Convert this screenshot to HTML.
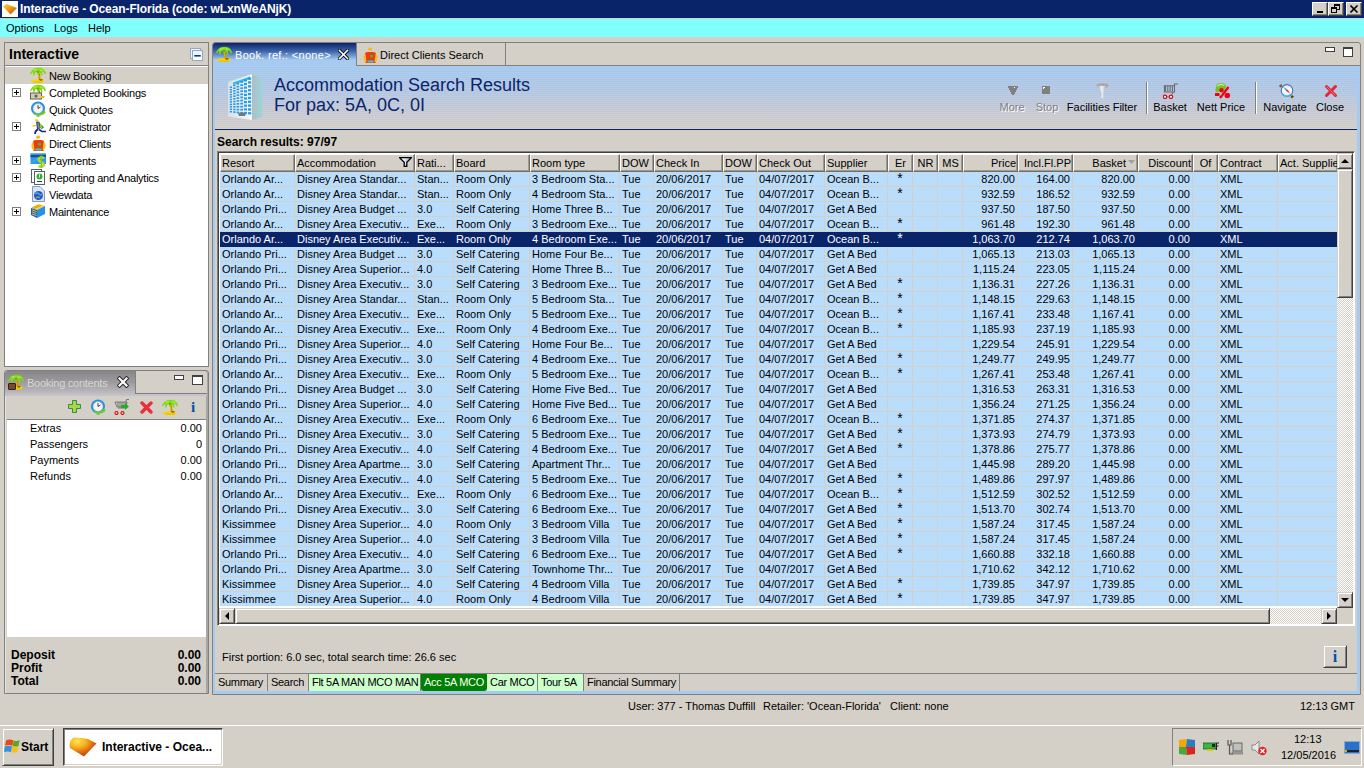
<!DOCTYPE html>
<html><head><meta charset="utf-8">
<style>
*{box-sizing:border-box;margin:0;padding:0}
html,body{width:1364px;height:768px;overflow:hidden;background:#D4D0C8;font-family:"Liberation Sans",sans-serif;font-size:11px;color:#000}
.a{position:absolute}
.t{position:absolute;white-space:nowrap;line-height:13px}
/* title bar */
#title{left:0;top:0;width:1364px;height:18px;background:#0A246A}
#title .tx{left:20px;top:2px;color:#fff;font-weight:bold;font-size:12px;line-height:14px;letter-spacing:-0.1px}
.wb{position:absolute;top:2px;width:16px;height:14px;background:#D4D0C8;border-top:1px solid #fff;border-left:1px solid #fff;border-right:1px solid #404040;border-bottom:1px solid #404040;box-shadow:inset -1px -1px 0 #808080}
#menu{left:0;top:18px;width:1364px;height:19px;background:#80FFFF;border-top:1px solid #D4D0C8}
#menu .t{top:3px}
/* panels */
.panel{position:absolute;border:1px solid #808080}
.white{background:#fff}
/* table */
#tbl{left:217px;top:151px;width:1138px;height:475px;border-top:1px solid #808080;border-left:1px solid #808080;border-right:1px solid #fff;border-bottom:1px solid #fff}
#tbl .in{position:absolute;left:0;top:0;width:1136px;height:473px;border-top:1px solid #404040;border-left:1px solid #404040;background:#fff}
#hdr{position:absolute;left:220px;top:154px;width:1117px;height:18px;overflow:hidden}
.hc{position:absolute;top:0;height:18px;background:#D4D0C8;border-top:1px solid #fff;border-left:1px solid #fff;border-right:1px solid #716F64;border-bottom:1px solid #716F64;box-shadow:inset -1px -1px 0 #9D9A92;padding:2px 1px 0 1px;white-space:nowrap;overflow:hidden;line-height:13px}
.hc.ar{text-align:right}.hc.ac{text-align:center}
#body{position:absolute;left:220px;top:172px;width:1117px;height:434px;overflow:hidden;background:#BBDDFC}
.row{position:absolute;left:0;width:1117px;height:15px;border-bottom:1px solid #D4D0C8}
.row.sel{background:#0A246A;color:#fff;border-bottom-color:#0A246A}
.c{position:absolute;top:0;height:14px;line-height:14px;padding:0 2px;white-space:nowrap;overflow:hidden}
.ast{font-size:14px;line-height:14px;position:relative;top:-1px}
.c.ar{text-align:right}.c.ac{text-align:center}
.vg{position:absolute;top:0;width:1px;height:435px;background:#D4D0C8}
.btn3d{position:absolute;background:#D4D0C8;border-top:1px solid #D4D0C8;border-left:1px solid #D4D0C8;border-right:1px solid #404040;border-bottom:1px solid #404040;box-shadow:inset 1px 1px 0 #fff,inset -1px -1px 0 #808080}
.dither{background-color:#fff;background-image:linear-gradient(45deg,#D4D0C8 25%,transparent 25%,transparent 75%,#D4D0C8 75%),linear-gradient(45deg,#D4D0C8 25%,transparent 25%,transparent 75%,#D4D0C8 75%);background-size:2px 2px;background-position:0 0,1px 1px}
.tree .t{left:49px;margin-top:1px;letter-spacing:-0.25px}
.pm{position:absolute;left:12px;width:9px;height:9px;border:1px solid #808080;background:#fff}
.pm:before{content:"";position:absolute;left:1px;top:3px;width:5px;height:1px;background:#000}
.pm:after{content:"";position:absolute;left:3px;top:1px;width:1px;height:5px;background:#000}
.btab{position:absolute;top:674px;height:17px;border-right:1px solid #808080;padding:2px 0 0 3px;line-height:13px;white-space:nowrap;letter-spacing:-0.3px;overflow:hidden}
.tb .t{top:101px}
</style></head><body>
<svg width="0" height="0" style="position:absolute">
<defs>
<symbol id="palm" viewBox="0 0 16 16">
 <path d="M0.5 13.8 Q1.5 12.3 5 12.2 L13 12.2 Q15 12.6 14.5 14.3 Q12.5 16 8 16 Q2.5 16 0.5 13.8 Z" fill="#F8D800"/>
 <path d="M3 15 H13" stroke="#E8B800" stroke-width="1"/>
 <path d="M8.2 4.5 Q9.8 8 9.6 13.5" stroke="#E8B000" stroke-width="2.2" fill="none"/>
 <path d="M9 7.5 L10 8 M9.3 10 L10.2 10.5 M9 12 L10 12.5" stroke="#B04A00" stroke-width="1"/>
 <path d="M10 13 L12.5 12.8" stroke="#503000" stroke-width="1"/>
 <path d="M0 6.5 Q1.5 2.5 5 1.2 Q8 0.2 11 1 Q15 2.2 16 6.5 L15 7.5 Q14 5 12 4.2 L12.5 8.5 L11.3 8.5 Q10.5 5.5 9.3 4.8 L8.8 8 L7.8 8 Q7.2 5.5 6.3 4.8 Q4.8 5.3 4.4 8.5 L3.3 8.5 Q3.2 5.5 2.8 5 Q1.8 5.5 1.2 7.5 Z" fill="#80D818"/>
 <path d="M3 3 Q6 1.5 8 2.5 Q6 3 5 4.5 Z M9 2.5 Q12 1.5 14 4 Q12 3.5 10.5 4 Z" fill="#A8EC30"/>
 <path d="M6.5 4.5 Q8 3.5 9.5 4.5 L9 6 L7.5 6 Z" fill="#58B010"/>
</symbol>
<symbol id="clock" viewBox="0 0 16 16">
 <circle cx="8" cy="7.5" r="7" fill="#1E90E8"/><circle cx="8" cy="7.5" r="5" fill="#F4F4F4" stroke="#9AB" stroke-width="0.6"/>
 <path d="M8 4 V7.5 L10.5 6" stroke="#333" stroke-width="0.9" fill="none"/>
 <path d="M3 11 Q8 16 14.5 9 L15.5 12 Q10 17 3.5 13 Z" fill="#6CC830"/><path d="M6 15.5 L9 12 L9.5 16Z" fill="#6CC830"/>
</symbol>
<symbol id="admin" viewBox="0 0 16 16">
 <path d="M5 1.5 Q7 0.5 8.5 2.5 L7.5 4 L5.5 3.5 Z" fill="#F8C820"/>
 <path d="M6 4 L9 3.5 L11 7 L9.5 11 L7 11 Z" fill="#3A48A8"/>
 <path d="M8 5 L9 10" stroke="#60B040" stroke-width="1.4"/>
 <path d="M10 6 Q13 7 14 9.5 L12 11 L10 10 Z" fill="#30A020"/><path d="M10.5 6.5 L11.5 10" stroke="#F8C820" stroke-width="1.2"/>
 <path d="M6 7.5 L2.5 8" stroke="#F8C820" stroke-width="1.4"/>
 <path d="M8 11 L5.5 13.5 L5 16" stroke="#1A2090" stroke-width="1.8" fill="none"/>
 <path d="M9 11.5 L12 13.5 L16 13.5" stroke="#1A2090" stroke-width="1.6" fill="none"/>
</symbol>
<symbol id="client" viewBox="0 0 16 16">
 <path d="M6 2 Q7 0 9.5 0.8 Q11 2 9.5 3.5 L7 3.8 Q5.5 3 6 2Z" fill="#F8B818"/>
 <path d="M3 7 Q3 5 6 5 L11 5 Q14 5 14 7 L13.5 16 L3.5 16 Z" fill="#F03A10"/>
 <path d="M1.5 9 Q2 7 3.5 7 L4.5 15 Q2 15 1.5 12 Z M15.5 9 Q15 7 13.5 7 L12.5 15 Q15 15 15.5 12 Z" fill="#F8C020"/>
 <rect x="8" y="8" width="3" height="2.5" fill="#30C040"/>
 <rect x="5.5" y="13.5" width="6" height="2" fill="#30D0D0"/>
</symbol>
<symbol id="pay" viewBox="0 0 16 16">
 <rect x="0.5" y="1" width="15.5" height="11" fill="#2C98E8"/>
 <rect x="0.5" y="1" width="15.5" height="1" fill="#60B8F8"/>
 <rect x="0.5" y="3" width="15.5" height="2.2" fill="#18508A"/>
 <path d="M1 11 L8 6" stroke="#60B0F0" stroke-width="0.8"/>
 <path d="M14 6.5 Q13 5 10.5 5.5 Q8 6.5 9 8.5 Q10 10 12 10.5 Q14.5 11.5 13.5 13.5 Q12 15.5 8.5 14" stroke="#A8DC28" stroke-width="2.6" fill="none"/>
 <path d="M11.3 3.5 V16" stroke="#88C020" stroke-width="1.2"/>
</symbol>
<symbol id="report" viewBox="0 0 16 16">
 <rect x="1.5" y="0.5" width="10" height="13" fill="#fff" stroke="#506070" stroke-width="1"/>
 <rect x="4.5" y="2.5" width="10" height="13" fill="#fff" stroke="#506070" stroke-width="1"/>
 <circle cx="9.5" cy="7.5" r="3" fill="#30B030"/><path d="M9.5 5.5 V8.5" stroke="#fff" stroke-width="1"/><path d="M7 12.5 H12" stroke="#333" stroke-width="1"/>
</symbol>
<symbol id="view" viewBox="0 0 16 16">
 <path d="M2.5 0.5 H10 L14.5 5 V15.5 H2.5Z" fill="#D8E4F4" stroke="#8898B8" stroke-width="1"/>
 <circle cx="8.5" cy="9.5" r="4.5" fill="#3050C8"/><path d="M5 8 Q7 6 9 8 Q11 10 12 8" stroke="#40B0E0" stroke-width="1.5" fill="none"/><path d="M6 12 Q8 10 10 12" stroke="#60C050" stroke-width="1.2" fill="none"/>
</symbol>
<symbol id="maint" viewBox="0 0 16 16">
 <path d="M1 5 L9 1 L15 3 L7 7Z" fill="#F8D040"/><path d="M1 5 L7 7 L7 15 L1 12Z" fill="#1060C0"/><path d="M7 7 L15 3 L15 11 L7 15Z" fill="#2890E8"/>
 <path d="M2 7 L6.5 8.5 M2 9 L6.5 10.5 M2 11 L6.5 12.5" stroke="#F0C030" stroke-width="1"/><path d="M2.5 4.5 L9 2 M4 5.5 L11 2.5" stroke="#D09000" stroke-width="0.8"/>
</symbol>
<symbol id="cash" viewBox="0 0 16 16">
 <rect x="0.5" y="9" width="11" height="6" fill="#D0D0B0" stroke="#606050" stroke-width="1"/><circle cx="6" cy="12" r="1.6" fill="#606050"/><path d="M11 12 H15 L14 14 H11Z" fill="#F0C000"/>
</symbol>
</defs>
</svg>

<!-- Title bar -->
<div id="title" class="a">
  <div class="a" style="left:2px;top:1px;width:16px;height:16px;background:#fff"></div>
  <svg class="a" style="left:2px;top:1px" width="16" height="16" viewBox="0 0 16 16"><defs><linearGradient id="tic" x1="0" y1="0" x2="1" y2="1"><stop offset="0" stop-color="#FFD030"/><stop offset="0.45" stop-color="#F09A18"/><stop offset="1" stop-color="#B84A08"/></linearGradient></defs><path d="M1 5.5 L4.5 3 L15 7 L8.5 13.5 Z" fill="url(#tic)"/></svg>
  <div class="t tx">Interactive - Ocean-Florida (code: wLxnWeANjK)</div>
  <div class="wb" style="left:1312px"><div class="a" style="left:4px;top:8px;width:6px;height:2px;background:#000"></div></div>
  <div class="wb" style="left:1328px"><div class="a" style="left:5px;top:1px;width:6px;height:6px;border:1px solid #000;border-top-width:2px"></div><div class="a" style="left:2px;top:4px;width:6px;height:6px;border:1px solid #000;border-top-width:2px;background:#D4D0C8"></div></div>
  <div class="wb" style="left:1346px"><svg class="a" style="left:3px;top:2px" width="9" height="8"><path d="M0.5 0.5 L7.5 7.5 M7.5 0.5 L0.5 7.5" stroke="#000" stroke-width="1.6"/></svg></div>
</div>
<div id="menu" class="a">
  <div class="t" style="left:6px">Options</div>
  <div class="t" style="left:54px">Logs</div>
  <div class="t" style="left:88px">Help</div>
</div>

<!-- Left tree panel -->
<div class="panel" style="left:4px;top:42px;width:205px;height:325px;background:#fff">
  <div class="a" style="left:0;top:0;width:203px;height:23px;background:#D4D0C8;border-bottom:1px solid #808080"></div>
  <div class="t" style="left:4px;top:3px;font-weight:bold;font-size:14px;line-height:16px">Interactive</div>
  <div class="a" style="left:185px;top:5px;width:11px;height:11px;border:1px solid #9AA4BC;background:#E8F8FF"></div>
  <div class="a" style="left:187px;top:7px;width:11px;height:11px;border:1px solid #9AA4BC;background:linear-gradient(#E0F6FF,#fff)"><div class="a" style="left:1px;top:4px;width:7px;height:2px;background:linear-gradient(#0A3A7A 50%,#6A8AB0 50%);border-radius:1px"></div></div>
  <div class="a" style="left:0;top:24px;width:203px;height:17px;background:#D4D0C8"></div>
</div>
<div class="tree">
  <div class="t" style="top:69px">New Booking</div>
  <div class="t" style="top:86px">Completed Bookings</div>
  <div class="t" style="top:103px">Quick Quotes</div>
  <div class="t" style="top:120px">Administrator</div>
  <div class="t" style="top:137px">Direct Clients</div>
  <div class="t" style="top:154px">Payments</div>
  <div class="t" style="top:171px">Reporting and Analytics</div>
  <div class="t" style="top:188px">Viewdata</div>
  <div class="t" style="top:205px">Maintenance</div>
  <svg class="a" style="left:30px;top:67px" width="16" height="16"><use href="#palm"/></svg>
  <svg class="a" style="left:30px;top:84px" width="16" height="11" viewBox="0 0 16 11" preserveAspectRatio="xMidYMin slice"><use href="#palm" width="16" height="16"/></svg>
  <svg class="a" style="left:30px;top:84px" width="16" height="16"><use href="#cash"/></svg>
  <svg class="a" style="left:30px;top:101px" width="16" height="16"><use href="#clock"/></svg>
  <svg class="a" style="left:30px;top:118px" width="16" height="16"><use href="#admin"/></svg>
  <svg class="a" style="left:30px;top:135px" width="16" height="16"><use href="#client"/></svg>
  <svg class="a" style="left:30px;top:152px" width="16" height="16"><use href="#pay"/></svg>
  <svg class="a" style="left:30px;top:169px" width="16" height="16"><use href="#report"/></svg>
  <svg class="a" style="left:30px;top:186px" width="16" height="16"><use href="#view"/></svg>
  <svg class="a" style="left:30px;top:203px" width="16" height="16"><use href="#maint"/></svg>
  <div class="pm" style="top:88px"></div>
  <div class="pm" style="top:122px"></div>
  <div class="pm" style="top:156px"></div>
  <div class="pm" style="top:173px"></div>
  <div class="pm" style="top:207px"></div>
</div>

<!-- Booking contents panel -->
<div class="panel" style="left:4px;top:370px;width:205px;height:324px;background:#D4D0C8;border-radius:3px 3px 0 0;box-shadow:inset 1px 0 0 #E8E6E2,inset -2px 0 0 #A8A6A2"></div>
<div class="a" style="left:5px;top:371px;width:202px;height:25px;background:linear-gradient(#868588,#9d9b9e 45%,#bbb8bd 85%,#c8c5cc);border-radius:3px 3px 0 0"></div>
<div class="a" style="left:135px;top:371px;width:72px;height:23px;background:#D4D0C8;border-left:1px solid #808080;border-bottom:1px solid #808080;border-top-right-radius:3px"></div>
<svg class="a" style="left:8px;top:374px" width="16" height="16"><use href="#palm"/></svg>
<div class="a" style="left:8px;top:383px;width:8px;height:7px;background:#7A4A30;border:1px solid #3A2010;border-radius:1px"></div>
<div class="t" style="left:27px;top:377px;color:#D8D6D2;letter-spacing:-0.25px">Booking contents</div>
<svg class="a" style="left:117px;top:376px" width="12" height="12" viewBox="0 0 12 12"><path d="M2.5 2.5 L9.5 9.5 M9.5 2.5 L2.5 9.5" stroke="#222" stroke-width="4" stroke-linecap="square"/><path d="M2.5 2.5 L9.5 9.5 M9.5 2.5 L2.5 9.5" stroke="#fff" stroke-width="2.2" stroke-linecap="square"/></svg>
<div class="a" style="left:174px;top:375px;width:10px;height:5px;border:1px solid #404040;background:#fff"></div>
<div class="a" style="left:192px;top:375px;width:11px;height:10px;border:1px solid #404040;border-top-width:2px;background:#fff"></div>
<div class="a" style="left:7px;top:419px;width:199px;height:1px;background:#808080"></div>
<div class="a" style="left:7px;top:420px;width:199px;height:217px;background:#fff"></div>
<!-- booking toolbar icons -->
<svg class="a" style="left:68px;top:400px" width="13" height="13" viewBox="0 0 13 13"><path d="M4.5 0.5 H8.5 V4.5 H12.5 V8.5 H8.5 V12.5 H4.5 V8.5 H0.5 V4.5 H4.5 Z" fill="#A8D848" stroke="#3A8A40" stroke-width="1"/></svg>
<svg class="a" style="left:90px;top:399px" width="16" height="16"><use href="#clock"/></svg>
<svg class="a" style="left:114px;top:399px" width="16" height="16" viewBox="0 0 16 16"><path d="M15 0.5 H12.5 L11 9 H4" stroke="#777" stroke-width="1" fill="none"/><path d="M1 3 H13 L12 8 H3 Z" fill="none" stroke="#777" stroke-width="1"/><path d="M4 3 V8 M6 3 V8 M8 3 V8 M10 3 V8" stroke="#777" stroke-width="1"/><circle cx="2.5" cy="14" r="1.5" fill="none" stroke="#E00000" stroke-width="1.1"/><circle cx="8.5" cy="14" r="1.5" fill="none" stroke="#E00000" stroke-width="1.1"/><path d="M7 6 H11 V4 L15 7.5 L11 11 V9 H7 Z" fill="#20B020"/></svg>
<svg class="a" style="left:140px;top:401px" width="13" height="13" viewBox="0 0 13 13"><path d="M2 2 L11 11 M11 2 L2 11" stroke="#E8303A" stroke-width="3.4" stroke-linecap="round"/></svg>
<svg class="a" style="left:162px;top:399px" width="16" height="16"><use href="#palm"/></svg>
<div class="t" style="left:191px;top:400px;font-family:'Liberation Serif',serif;font-weight:bold;font-size:15px;line-height:15px;color:#0050A8">i</div>
<div class="t" style="left:30px;top:422px">Extras</div><div class="t" style="left:159px;top:422px;width:43px;text-align:right">0.00</div>
<div class="t" style="left:30px;top:438px">Passengers</div><div class="t" style="left:159px;top:438px;width:43px;text-align:right">0</div>
<div class="t" style="left:30px;top:454px">Payments</div><div class="t" style="left:159px;top:454px;width:43px;text-align:right">0.00</div>
<div class="t" style="left:30px;top:470px">Refunds</div><div class="t" style="left:159px;top:470px;width:43px;text-align:right">0.00</div>
<div class="t" style="left:11px;top:649px;font-weight:bold;font-size:12px">Deposit</div><div class="t" style="left:150px;top:649px;width:51px;text-align:right;font-weight:bold;font-size:12px">0.00</div>
<div class="t" style="left:11px;top:662px;font-weight:bold;font-size:12px">Profit</div><div class="t" style="left:150px;top:662px;width:51px;text-align:right;font-weight:bold;font-size:12px">0.00</div>
<div class="t" style="left:11px;top:675px;font-weight:bold;font-size:12px">Total</div><div class="t" style="left:150px;top:675px;width:51px;text-align:right;font-weight:bold;font-size:12px">0.00</div>

<!-- Main panel -->
<div class="panel" style="left:212px;top:42px;width:1149px;height:653px;background:#A6CAF0;border-radius:3px 3px 0 0"></div>
<div class="a" style="left:213px;top:43px;width:1147px;height:23px;background:#D4D0C8;border-bottom:1px solid #808080;border-top-right-radius:3px"></div>
<div class="a" style="left:213px;top:43px;width:143px;height:23px;background:linear-gradient(#0A246A 0px,#3a63a8 8px,#A6CAF0 17px,#A6CAF0 23px);border-top-left-radius:2px"></div>
<div class="a" style="left:356px;top:43px;width:150px;height:23px;border-left:1px solid #808080;border-right:1px solid #808080;border-bottom:1px solid #808080"></div>
<svg class="a" style="left:216px;top:46px" width="16" height="16"><use href="#palm"/></svg>
<svg class="a" style="left:362px;top:47px" width="16" height="16"><use href="#client"/></svg>
<div class="t" style="left:235px;top:49px;color:#fff;letter-spacing:0.3px">Book. ref.: &lt;none&gt;</div>
<svg class="a" style="left:338px;top:49px" width="11" height="11" viewBox="0 0 11 11"><path d="M1.5 1.5 L9.5 9.5 M9.5 1.5 L1.5 9.5" stroke="#000" stroke-width="3.2" stroke-linecap="square"/><path d="M1.5 1.5 L9.5 9.5 M9.5 1.5 L1.5 9.5" stroke="#fff" stroke-width="1.6" stroke-linecap="square"/></svg>
<div class="t" style="left:380px;top:49px">Direct Clients Search</div>
<div class="a" style="left:1325px;top:47px;width:10px;height:5px;border:1px solid #404040;background:#fff"></div>
<div class="a" style="left:1343px;top:47px;width:10px;height:10px;border:1px solid #404040;border-top-width:2px;background:#fff"></div>
<div class="a" style="left:215px;top:66px;width:1142px;height:625px;background:#D4D0C8"></div>
<div class="a" style="left:215px;top:66px;width:1142px;height:63px;background:linear-gradient(#A6CAF0 0%,#B2C8E6 35%,#C6CAD6 70%,#D4D0CA 100%)"></div>
<div class="a" style="left:215px;top:66px;width:1142px;height:63px;background:repeating-linear-gradient(rgba(255,255,255,0.06) 0 1px,rgba(0,0,0,0.015) 1px 2px)"></div>
<div class="a" style="left:215px;top:129px;width:1142px;height:1px;background:#0A246A"></div>
<svg class="a" style="left:226px;top:73px" width="37" height="48" viewBox="0 0 37 48">
<defs><linearGradient id="bside" x1="0" x2="1"><stop offset="0" stop-color="#B0BEC0"/><stop offset="1" stop-color="#9AD4DC"/></linearGradient>
<linearGradient id="bfront" x1="0" x2="1"><stop offset="0" stop-color="#D8E0E4"/><stop offset="1" stop-color="#F4F8FA"/></linearGradient></defs>
<path d="M2 9 L26 1 L26 47 L2 43.5 Z" fill="url(#bfront)"/>
<path d="M26 1 L36 5 L36 44 L26 47 Z" fill="url(#bside)"/>
<path d="M7 9.5 L24 3.5 L24 6 L7 12 Z" fill="#30B8F0"/>
<rect x="3.8" y="13.5" width="2.2" height="1.5" fill="#2A9BE8"/>
<rect x="3.8" y="16.0" width="2.2" height="1.5" fill="#2A9BE8"/>
<rect x="3.8" y="18.4" width="2.2" height="1.5" fill="#2A9BE8"/>
<rect x="3.8" y="20.9" width="2.2" height="1.5" fill="#2A9BE8"/>
<rect x="3.8" y="23.3" width="2.2" height="1.5" fill="#2A9BE8"/>
<rect x="3.8" y="25.8" width="2.2" height="1.5" fill="#2A9BE8"/>
<rect x="3.8" y="28.2" width="2.2" height="1.5" fill="#2A9BE8"/>
<rect x="3.8" y="30.7" width="2.2" height="1.5" fill="#2A9BE8"/>
<rect x="3.8" y="33.1" width="2.2" height="1.5" fill="#2A9BE8"/>
<rect x="3.8" y="35.6" width="2.2" height="1.5" fill="#2A9BE8"/>
<rect x="3.8" y="38.0" width="2.2" height="1.5" fill="#2A9BE8"/>
<rect x="7.2" y="11.7" width="2.4" height="1.6" fill="#2A9BE8"/>
<rect x="7.2" y="14.4" width="2.4" height="1.6" fill="#2A9BE8"/>
<rect x="7.2" y="17.0" width="2.4" height="1.6" fill="#2A9BE8"/>
<rect x="7.2" y="19.7" width="2.4" height="1.6" fill="#2A9BE8"/>
<rect x="7.2" y="22.4" width="2.4" height="1.6" fill="#2A9BE8"/>
<rect x="7.2" y="25.0" width="2.4" height="1.6" fill="#2A9BE8"/>
<rect x="7.2" y="27.7" width="2.4" height="1.6" fill="#2A9BE8"/>
<rect x="7.2" y="30.3" width="2.4" height="1.6" fill="#2A9BE8"/>
<rect x="7.2" y="33.0" width="2.4" height="1.6" fill="#2A9BE8"/>
<rect x="7.2" y="35.7" width="2.4" height="1.6" fill="#2A9BE8"/>
<rect x="7.2" y="38.3" width="2.4" height="1.6" fill="#2A9BE8"/>
<rect x="10.6" y="9.9" width="2.6" height="1.7" fill="#2A9BE8"/>
<rect x="10.6" y="12.8" width="2.6" height="1.7" fill="#2A9BE8"/>
<rect x="10.6" y="15.6" width="2.6" height="1.7" fill="#2A9BE8"/>
<rect x="10.6" y="18.5" width="2.6" height="1.7" fill="#2A9BE8"/>
<rect x="10.6" y="21.4" width="2.6" height="1.7" fill="#2A9BE8"/>
<rect x="10.6" y="24.3" width="2.6" height="1.7" fill="#2A9BE8"/>
<rect x="10.6" y="27.1" width="2.6" height="1.7" fill="#2A9BE8"/>
<rect x="10.6" y="30.0" width="2.6" height="1.7" fill="#2A9BE8"/>
<rect x="10.6" y="32.9" width="2.6" height="1.7" fill="#2A9BE8"/>
<rect x="10.6" y="35.8" width="2.6" height="1.7" fill="#2A9BE8"/>
<rect x="10.6" y="38.6" width="2.6" height="1.7" fill="#2A9BE8"/>
<rect x="14.3" y="8.1" width="2.8" height="1.8" fill="#2A9BE8"/>
<rect x="14.3" y="11.2" width="2.8" height="1.8" fill="#2A9BE8"/>
<rect x="14.3" y="14.3" width="2.8" height="1.8" fill="#2A9BE8"/>
<rect x="14.3" y="17.3" width="2.8" height="1.8" fill="#2A9BE8"/>
<rect x="14.3" y="20.4" width="2.8" height="1.8" fill="#2A9BE8"/>
<rect x="14.3" y="23.5" width="2.8" height="1.8" fill="#2A9BE8"/>
<rect x="14.3" y="26.6" width="2.8" height="1.8" fill="#2A9BE8"/>
<rect x="14.3" y="29.7" width="2.8" height="1.8" fill="#2A9BE8"/>
<rect x="14.3" y="32.8" width="2.8" height="1.8" fill="#2A9BE8"/>
<rect x="14.3" y="35.8" width="2.8" height="1.8" fill="#2A9BE8"/>
<rect x="14.3" y="38.9" width="2.8" height="1.8" fill="#2A9BE8"/>
<rect x="18.0" y="6.3" width="3.0" height="2.2" fill="#2A9BE8"/>
<rect x="18.0" y="9.9" width="3.0" height="2.2" fill="#2A9BE8"/>
<rect x="18.0" y="13.5" width="3.0" height="2.2" fill="#2A9BE8"/>
<rect x="18.0" y="17.2" width="3.0" height="2.2" fill="#2A9BE8"/>
<rect x="18.0" y="20.8" width="3.0" height="2.2" fill="#2A9BE8"/>
<rect x="18.0" y="24.4" width="3.0" height="2.2" fill="#2A9BE8"/>
<rect x="18.0" y="28.0" width="3.0" height="2.2" fill="#2A9BE8"/>
<rect x="18.0" y="31.6" width="3.0" height="2.2" fill="#2A9BE8"/>
<rect x="18.0" y="35.3" width="3.0" height="2.2" fill="#2A9BE8"/>
<rect x="18.0" y="38.9" width="3.0" height="2.2" fill="#2A9BE8"/>
<rect x="22.0" y="4.5" width="3.2" height="2.3" fill="#2A9BE8"/>
<rect x="22.0" y="8.3" width="3.2" height="2.3" fill="#2A9BE8"/>
<rect x="22.0" y="12.2" width="3.2" height="2.3" fill="#2A9BE8"/>
<rect x="22.0" y="16.1" width="3.2" height="2.3" fill="#2A9BE8"/>
<rect x="22.0" y="19.9" width="3.2" height="2.3" fill="#2A9BE8"/>
<rect x="22.0" y="23.8" width="3.2" height="2.3" fill="#2A9BE8"/>
<rect x="22.0" y="27.6" width="3.2" height="2.3" fill="#2A9BE8"/>
<rect x="22.0" y="31.4" width="3.2" height="2.3" fill="#2A9BE8"/>
<rect x="22.0" y="35.3" width="3.2" height="2.3" fill="#2A9BE8"/>
<rect x="22.0" y="39.1" width="3.2" height="2.3" fill="#2A9BE8"/>
<path d="M12 40 Q16 39 20 40 L19 43 L13 43 Z" fill="#707880"/>
</svg>
<div class="t" style="left:274px;top:75px;font-size:18px;line-height:20px;color:#0A246A">Accommodation Search Results</div>
<div class="t" style="left:274px;top:95px;font-size:18px;line-height:20px;color:#0A246A">For pax: 5A, 0C, 0I</div>
<div class="t" style="left:217px;top:136px;font-weight:bold;font-size:12px">Search results: 97/97</div>

<div id="tbl" class="a"><div class="in"></div></div>
<div id="hdr"><div class="hc al" style="left:0px;width:75px"><span>Resort</span></div><div class="hc al" style="left:75px;width:120px"><span>Accommodation</span></div><div class="hc al" style="left:195px;width:39px"><span>Rati...</span></div><div class="hc al" style="left:234px;width:76px"><span>Board</span></div><div class="hc al" style="left:310px;width:90px"><span>Room type</span></div><div class="hc al" style="left:400px;width:34px"><span>DOW</span></div><div class="hc al" style="left:434px;width:69px"><span>Check In</span></div><div class="hc al" style="left:503px;width:34px"><span>DOW</span></div><div class="hc al" style="left:537px;width:68px"><span>Check Out</span></div><div class="hc al" style="left:605px;width:63px"><span>Supplier</span></div><div class="hc ac" style="left:668px;width:25px"><span>Er</span></div><div class="hc ac" style="left:693px;width:25px"><span>NR</span></div><div class="hc ac" style="left:718px;width:25px"><span>MS</span></div><div class="hc ar" style="left:743px;width:55px"><span>Price</span></div><div class="hc ar" style="left:798px;width:55px"><span>Incl.Fl.PP</span></div><div class="hc ar" style="left:853px;width:65px;padding-right:11px"><span>Basket</span></div><div class="hc ar" style="left:918px;width:55px"><span>Discount</span></div><div class="hc ac" style="left:973px;width:25px"><span>Of</span></div><div class="hc al" style="left:998px;width:60px"><span>Contract</span></div><div class="hc al" style="left:1058px;width:60px"><span>Act. Supplie</span></div></div>
<svg class="a" style="left:399px;top:157px" width="13" height="10" viewBox="0 0 13 10"><defs><linearGradient id="hf" x1="0" x2="1"><stop offset="0.2" stop-color="#fff"/><stop offset="1" stop-color="#90B0E0"/></linearGradient></defs><path d="M0.7 0.7 H12.3 L7.8 5.2 V9.3 H5.2 V5.2 Z" fill="url(#hf)" stroke="#000" stroke-width="1.3" stroke-linejoin="miter"/></svg>
<svg class="a" style="left:1128px;top:160px" width="8" height="4" viewBox="0 0 8 4"><path d="M0 0 H7 L3.5 4 Z" fill="#A0A0A0"/></svg>
<div id="body"><div class="vg" style="left:74px"></div><div class="vg" style="left:194px"></div><div class="vg" style="left:233px"></div><div class="vg" style="left:309px"></div><div class="vg" style="left:399px"></div><div class="vg" style="left:433px"></div><div class="vg" style="left:502px"></div><div class="vg" style="left:536px"></div><div class="vg" style="left:604px"></div><div class="vg" style="left:667px"></div><div class="vg" style="left:692px"></div><div class="vg" style="left:717px"></div><div class="vg" style="left:742px"></div><div class="vg" style="left:797px"></div><div class="vg" style="left:852px"></div><div class="vg" style="left:917px"></div><div class="vg" style="left:972px"></div><div class="vg" style="left:997px"></div><div class="vg" style="left:1057px"></div>
<div class="row" style="top:0px"><div class="c al" style="left:0px;width:74px">Orlando Ar...</div><div class="c al" style="left:75px;width:119px">Disney Area Standar...</div><div class="c al" style="left:195px;width:38px">Stan...</div><div class="c al" style="left:234px;width:75px">Room Only</div><div class="c al" style="left:310px;width:89px">3 Bedroom Sta...</div><div class="c al" style="left:400px;width:33px">Tue</div><div class="c al" style="left:434px;width:68px">20/06/2017</div><div class="c al" style="left:503px;width:33px">Tue</div><div class="c al" style="left:537px;width:67px">04/07/2017</div><div class="c al" style="left:605px;width:62px">Ocean B...</div><div class="c ac" style="left:668px;width:24px"><span class="ast">*</span></div><div class="c ar" style="left:743px;width:54px">820.00</div><div class="c ar" style="left:798px;width:54px">164.00</div><div class="c ar" style="left:853px;width:64px">820.00</div><div class="c ar" style="left:918px;width:54px">0.00</div><div class="c al" style="left:998px;width:59px">XML</div></div>
<div class="row" style="top:15px"><div class="c al" style="left:0px;width:74px">Orlando Ar...</div><div class="c al" style="left:75px;width:119px">Disney Area Standar...</div><div class="c al" style="left:195px;width:38px">Stan...</div><div class="c al" style="left:234px;width:75px">Room Only</div><div class="c al" style="left:310px;width:89px">4 Bedroom Sta...</div><div class="c al" style="left:400px;width:33px">Tue</div><div class="c al" style="left:434px;width:68px">20/06/2017</div><div class="c al" style="left:503px;width:33px">Tue</div><div class="c al" style="left:537px;width:67px">04/07/2017</div><div class="c al" style="left:605px;width:62px">Ocean B...</div><div class="c ac" style="left:668px;width:24px"><span class="ast">*</span></div><div class="c ar" style="left:743px;width:54px">932.59</div><div class="c ar" style="left:798px;width:54px">186.52</div><div class="c ar" style="left:853px;width:64px">932.59</div><div class="c ar" style="left:918px;width:54px">0.00</div><div class="c al" style="left:998px;width:59px">XML</div></div>
<div class="row" style="top:30px"><div class="c al" style="left:0px;width:74px">Orlando Pri...</div><div class="c al" style="left:75px;width:119px">Disney Area Budget ...</div><div class="c al" style="left:195px;width:38px">3.0</div><div class="c al" style="left:234px;width:75px">Self Catering</div><div class="c al" style="left:310px;width:89px">Home Three B...</div><div class="c al" style="left:400px;width:33px">Tue</div><div class="c al" style="left:434px;width:68px">20/06/2017</div><div class="c al" style="left:503px;width:33px">Tue</div><div class="c al" style="left:537px;width:67px">04/07/2017</div><div class="c al" style="left:605px;width:62px">Get A Bed</div><div class="c ar" style="left:743px;width:54px">937.50</div><div class="c ar" style="left:798px;width:54px">187.50</div><div class="c ar" style="left:853px;width:64px">937.50</div><div class="c ar" style="left:918px;width:54px">0.00</div><div class="c al" style="left:998px;width:59px">XML</div></div>
<div class="row" style="top:45px"><div class="c al" style="left:0px;width:74px">Orlando Ar...</div><div class="c al" style="left:75px;width:119px">Disney Area Executiv...</div><div class="c al" style="left:195px;width:38px">Exe...</div><div class="c al" style="left:234px;width:75px">Room Only</div><div class="c al" style="left:310px;width:89px">3 Bedroom Exe...</div><div class="c al" style="left:400px;width:33px">Tue</div><div class="c al" style="left:434px;width:68px">20/06/2017</div><div class="c al" style="left:503px;width:33px">Tue</div><div class="c al" style="left:537px;width:67px">04/07/2017</div><div class="c al" style="left:605px;width:62px">Ocean B...</div><div class="c ac" style="left:668px;width:24px"><span class="ast">*</span></div><div class="c ar" style="left:743px;width:54px">961.48</div><div class="c ar" style="left:798px;width:54px">192.30</div><div class="c ar" style="left:853px;width:64px">961.48</div><div class="c ar" style="left:918px;width:54px">0.00</div><div class="c al" style="left:998px;width:59px">XML</div></div>
<div class="row sel" style="top:60px"><div class="c al" style="left:0px;width:74px">Orlando Ar...</div><div class="c al" style="left:75px;width:119px">Disney Area Executiv...</div><div class="c al" style="left:195px;width:38px">Exe...</div><div class="c al" style="left:234px;width:75px">Room Only</div><div class="c al" style="left:310px;width:89px">4 Bedroom Exe...</div><div class="c al" style="left:400px;width:33px">Tue</div><div class="c al" style="left:434px;width:68px">20/06/2017</div><div class="c al" style="left:503px;width:33px">Tue</div><div class="c al" style="left:537px;width:67px">04/07/2017</div><div class="c al" style="left:605px;width:62px">Ocean B...</div><div class="c ac" style="left:668px;width:24px"><span class="ast">*</span></div><div class="c ar" style="left:743px;width:54px">1,063.70</div><div class="c ar" style="left:798px;width:54px">212.74</div><div class="c ar" style="left:853px;width:64px">1,063.70</div><div class="c ar" style="left:918px;width:54px">0.00</div><div class="c al" style="left:998px;width:59px">XML</div></div>
<div class="row" style="top:75px"><div class="c al" style="left:0px;width:74px">Orlando Pri...</div><div class="c al" style="left:75px;width:119px">Disney Area Budget ...</div><div class="c al" style="left:195px;width:38px">3.0</div><div class="c al" style="left:234px;width:75px">Self Catering</div><div class="c al" style="left:310px;width:89px">Home Four Be...</div><div class="c al" style="left:400px;width:33px">Tue</div><div class="c al" style="left:434px;width:68px">20/06/2017</div><div class="c al" style="left:503px;width:33px">Tue</div><div class="c al" style="left:537px;width:67px">04/07/2017</div><div class="c al" style="left:605px;width:62px">Get A Bed</div><div class="c ar" style="left:743px;width:54px">1,065.13</div><div class="c ar" style="left:798px;width:54px">213.03</div><div class="c ar" style="left:853px;width:64px">1,065.13</div><div class="c ar" style="left:918px;width:54px">0.00</div><div class="c al" style="left:998px;width:59px">XML</div></div>
<div class="row" style="top:90px"><div class="c al" style="left:0px;width:74px">Orlando Pri...</div><div class="c al" style="left:75px;width:119px">Disney Area Superior...</div><div class="c al" style="left:195px;width:38px">4.0</div><div class="c al" style="left:234px;width:75px">Self Catering</div><div class="c al" style="left:310px;width:89px">Home Three B...</div><div class="c al" style="left:400px;width:33px">Tue</div><div class="c al" style="left:434px;width:68px">20/06/2017</div><div class="c al" style="left:503px;width:33px">Tue</div><div class="c al" style="left:537px;width:67px">04/07/2017</div><div class="c al" style="left:605px;width:62px">Get A Bed</div><div class="c ar" style="left:743px;width:54px">1,115.24</div><div class="c ar" style="left:798px;width:54px">223.05</div><div class="c ar" style="left:853px;width:64px">1,115.24</div><div class="c ar" style="left:918px;width:54px">0.00</div><div class="c al" style="left:998px;width:59px">XML</div></div>
<div class="row" style="top:105px"><div class="c al" style="left:0px;width:74px">Orlando Pri...</div><div class="c al" style="left:75px;width:119px">Disney Area Executiv...</div><div class="c al" style="left:195px;width:38px">3.0</div><div class="c al" style="left:234px;width:75px">Self Catering</div><div class="c al" style="left:310px;width:89px">3 Bedroom Exe...</div><div class="c al" style="left:400px;width:33px">Tue</div><div class="c al" style="left:434px;width:68px">20/06/2017</div><div class="c al" style="left:503px;width:33px">Tue</div><div class="c al" style="left:537px;width:67px">04/07/2017</div><div class="c al" style="left:605px;width:62px">Get A Bed</div><div class="c ac" style="left:668px;width:24px"><span class="ast">*</span></div><div class="c ar" style="left:743px;width:54px">1,136.31</div><div class="c ar" style="left:798px;width:54px">227.26</div><div class="c ar" style="left:853px;width:64px">1,136.31</div><div class="c ar" style="left:918px;width:54px">0.00</div><div class="c al" style="left:998px;width:59px">XML</div></div>
<div class="row" style="top:120px"><div class="c al" style="left:0px;width:74px">Orlando Ar...</div><div class="c al" style="left:75px;width:119px">Disney Area Standar...</div><div class="c al" style="left:195px;width:38px">Stan...</div><div class="c al" style="left:234px;width:75px">Room Only</div><div class="c al" style="left:310px;width:89px">5 Bedroom Sta...</div><div class="c al" style="left:400px;width:33px">Tue</div><div class="c al" style="left:434px;width:68px">20/06/2017</div><div class="c al" style="left:503px;width:33px">Tue</div><div class="c al" style="left:537px;width:67px">04/07/2017</div><div class="c al" style="left:605px;width:62px">Ocean B...</div><div class="c ac" style="left:668px;width:24px"><span class="ast">*</span></div><div class="c ar" style="left:743px;width:54px">1,148.15</div><div class="c ar" style="left:798px;width:54px">229.63</div><div class="c ar" style="left:853px;width:64px">1,148.15</div><div class="c ar" style="left:918px;width:54px">0.00</div><div class="c al" style="left:998px;width:59px">XML</div></div>
<div class="row" style="top:135px"><div class="c al" style="left:0px;width:74px">Orlando Ar...</div><div class="c al" style="left:75px;width:119px">Disney Area Executiv...</div><div class="c al" style="left:195px;width:38px">Exe...</div><div class="c al" style="left:234px;width:75px">Room Only</div><div class="c al" style="left:310px;width:89px">5 Bedroom Exe...</div><div class="c al" style="left:400px;width:33px">Tue</div><div class="c al" style="left:434px;width:68px">20/06/2017</div><div class="c al" style="left:503px;width:33px">Tue</div><div class="c al" style="left:537px;width:67px">04/07/2017</div><div class="c al" style="left:605px;width:62px">Ocean B...</div><div class="c ac" style="left:668px;width:24px"><span class="ast">*</span></div><div class="c ar" style="left:743px;width:54px">1,167.41</div><div class="c ar" style="left:798px;width:54px">233.48</div><div class="c ar" style="left:853px;width:64px">1,167.41</div><div class="c ar" style="left:918px;width:54px">0.00</div><div class="c al" style="left:998px;width:59px">XML</div></div>
<div class="row" style="top:150px"><div class="c al" style="left:0px;width:74px">Orlando Ar...</div><div class="c al" style="left:75px;width:119px">Disney Area Executiv...</div><div class="c al" style="left:195px;width:38px">Exe...</div><div class="c al" style="left:234px;width:75px">Room Only</div><div class="c al" style="left:310px;width:89px">4 Bedroom Exe...</div><div class="c al" style="left:400px;width:33px">Tue</div><div class="c al" style="left:434px;width:68px">20/06/2017</div><div class="c al" style="left:503px;width:33px">Tue</div><div class="c al" style="left:537px;width:67px">04/07/2017</div><div class="c al" style="left:605px;width:62px">Ocean B...</div><div class="c ac" style="left:668px;width:24px"><span class="ast">*</span></div><div class="c ar" style="left:743px;width:54px">1,185.93</div><div class="c ar" style="left:798px;width:54px">237.19</div><div class="c ar" style="left:853px;width:64px">1,185.93</div><div class="c ar" style="left:918px;width:54px">0.00</div><div class="c al" style="left:998px;width:59px">XML</div></div>
<div class="row" style="top:165px"><div class="c al" style="left:0px;width:74px">Orlando Pri...</div><div class="c al" style="left:75px;width:119px">Disney Area Superior...</div><div class="c al" style="left:195px;width:38px">4.0</div><div class="c al" style="left:234px;width:75px">Self Catering</div><div class="c al" style="left:310px;width:89px">Home Four Be...</div><div class="c al" style="left:400px;width:33px">Tue</div><div class="c al" style="left:434px;width:68px">20/06/2017</div><div class="c al" style="left:503px;width:33px">Tue</div><div class="c al" style="left:537px;width:67px">04/07/2017</div><div class="c al" style="left:605px;width:62px">Get A Bed</div><div class="c ar" style="left:743px;width:54px">1,229.54</div><div class="c ar" style="left:798px;width:54px">245.91</div><div class="c ar" style="left:853px;width:64px">1,229.54</div><div class="c ar" style="left:918px;width:54px">0.00</div><div class="c al" style="left:998px;width:59px">XML</div></div>
<div class="row" style="top:180px"><div class="c al" style="left:0px;width:74px">Orlando Pri...</div><div class="c al" style="left:75px;width:119px">Disney Area Executiv...</div><div class="c al" style="left:195px;width:38px">3.0</div><div class="c al" style="left:234px;width:75px">Self Catering</div><div class="c al" style="left:310px;width:89px">4 Bedroom Exe...</div><div class="c al" style="left:400px;width:33px">Tue</div><div class="c al" style="left:434px;width:68px">20/06/2017</div><div class="c al" style="left:503px;width:33px">Tue</div><div class="c al" style="left:537px;width:67px">04/07/2017</div><div class="c al" style="left:605px;width:62px">Get A Bed</div><div class="c ac" style="left:668px;width:24px"><span class="ast">*</span></div><div class="c ar" style="left:743px;width:54px">1,249.77</div><div class="c ar" style="left:798px;width:54px">249.95</div><div class="c ar" style="left:853px;width:64px">1,249.77</div><div class="c ar" style="left:918px;width:54px">0.00</div><div class="c al" style="left:998px;width:59px">XML</div></div>
<div class="row" style="top:195px"><div class="c al" style="left:0px;width:74px">Orlando Ar...</div><div class="c al" style="left:75px;width:119px">Disney Area Executiv...</div><div class="c al" style="left:195px;width:38px">Exe...</div><div class="c al" style="left:234px;width:75px">Room Only</div><div class="c al" style="left:310px;width:89px">5 Bedroom Exe...</div><div class="c al" style="left:400px;width:33px">Tue</div><div class="c al" style="left:434px;width:68px">20/06/2017</div><div class="c al" style="left:503px;width:33px">Tue</div><div class="c al" style="left:537px;width:67px">04/07/2017</div><div class="c al" style="left:605px;width:62px">Ocean B...</div><div class="c ac" style="left:668px;width:24px"><span class="ast">*</span></div><div class="c ar" style="left:743px;width:54px">1,267.41</div><div class="c ar" style="left:798px;width:54px">253.48</div><div class="c ar" style="left:853px;width:64px">1,267.41</div><div class="c ar" style="left:918px;width:54px">0.00</div><div class="c al" style="left:998px;width:59px">XML</div></div>
<div class="row" style="top:210px"><div class="c al" style="left:0px;width:74px">Orlando Pri...</div><div class="c al" style="left:75px;width:119px">Disney Area Budget ...</div><div class="c al" style="left:195px;width:38px">3.0</div><div class="c al" style="left:234px;width:75px">Self Catering</div><div class="c al" style="left:310px;width:89px">Home Five Bed...</div><div class="c al" style="left:400px;width:33px">Tue</div><div class="c al" style="left:434px;width:68px">20/06/2017</div><div class="c al" style="left:503px;width:33px">Tue</div><div class="c al" style="left:537px;width:67px">04/07/2017</div><div class="c al" style="left:605px;width:62px">Get A Bed</div><div class="c ar" style="left:743px;width:54px">1,316.53</div><div class="c ar" style="left:798px;width:54px">263.31</div><div class="c ar" style="left:853px;width:64px">1,316.53</div><div class="c ar" style="left:918px;width:54px">0.00</div><div class="c al" style="left:998px;width:59px">XML</div></div>
<div class="row" style="top:225px"><div class="c al" style="left:0px;width:74px">Orlando Pri...</div><div class="c al" style="left:75px;width:119px">Disney Area Superior...</div><div class="c al" style="left:195px;width:38px">4.0</div><div class="c al" style="left:234px;width:75px">Self Catering</div><div class="c al" style="left:310px;width:89px">Home Five Bed...</div><div class="c al" style="left:400px;width:33px">Tue</div><div class="c al" style="left:434px;width:68px">20/06/2017</div><div class="c al" style="left:503px;width:33px">Tue</div><div class="c al" style="left:537px;width:67px">04/07/2017</div><div class="c al" style="left:605px;width:62px">Get A Bed</div><div class="c ar" style="left:743px;width:54px">1,356.24</div><div class="c ar" style="left:798px;width:54px">271.25</div><div class="c ar" style="left:853px;width:64px">1,356.24</div><div class="c ar" style="left:918px;width:54px">0.00</div><div class="c al" style="left:998px;width:59px">XML</div></div>
<div class="row" style="top:240px"><div class="c al" style="left:0px;width:74px">Orlando Ar...</div><div class="c al" style="left:75px;width:119px">Disney Area Executiv...</div><div class="c al" style="left:195px;width:38px">Exe...</div><div class="c al" style="left:234px;width:75px">Room Only</div><div class="c al" style="left:310px;width:89px">6 Bedroom Exe...</div><div class="c al" style="left:400px;width:33px">Tue</div><div class="c al" style="left:434px;width:68px">20/06/2017</div><div class="c al" style="left:503px;width:33px">Tue</div><div class="c al" style="left:537px;width:67px">04/07/2017</div><div class="c al" style="left:605px;width:62px">Ocean B...</div><div class="c ac" style="left:668px;width:24px"><span class="ast">*</span></div><div class="c ar" style="left:743px;width:54px">1,371.85</div><div class="c ar" style="left:798px;width:54px">274.37</div><div class="c ar" style="left:853px;width:64px">1,371.85</div><div class="c ar" style="left:918px;width:54px">0.00</div><div class="c al" style="left:998px;width:59px">XML</div></div>
<div class="row" style="top:255px"><div class="c al" style="left:0px;width:74px">Orlando Pri...</div><div class="c al" style="left:75px;width:119px">Disney Area Executiv...</div><div class="c al" style="left:195px;width:38px">3.0</div><div class="c al" style="left:234px;width:75px">Self Catering</div><div class="c al" style="left:310px;width:89px">5 Bedroom Exe...</div><div class="c al" style="left:400px;width:33px">Tue</div><div class="c al" style="left:434px;width:68px">20/06/2017</div><div class="c al" style="left:503px;width:33px">Tue</div><div class="c al" style="left:537px;width:67px">04/07/2017</div><div class="c al" style="left:605px;width:62px">Get A Bed</div><div class="c ac" style="left:668px;width:24px"><span class="ast">*</span></div><div class="c ar" style="left:743px;width:54px">1,373.93</div><div class="c ar" style="left:798px;width:54px">274.79</div><div class="c ar" style="left:853px;width:64px">1,373.93</div><div class="c ar" style="left:918px;width:54px">0.00</div><div class="c al" style="left:998px;width:59px">XML</div></div>
<div class="row" style="top:270px"><div class="c al" style="left:0px;width:74px">Orlando Pri...</div><div class="c al" style="left:75px;width:119px">Disney Area Executiv...</div><div class="c al" style="left:195px;width:38px">4.0</div><div class="c al" style="left:234px;width:75px">Self Catering</div><div class="c al" style="left:310px;width:89px">4 Bedroom Exe...</div><div class="c al" style="left:400px;width:33px">Tue</div><div class="c al" style="left:434px;width:68px">20/06/2017</div><div class="c al" style="left:503px;width:33px">Tue</div><div class="c al" style="left:537px;width:67px">04/07/2017</div><div class="c al" style="left:605px;width:62px">Get A Bed</div><div class="c ac" style="left:668px;width:24px"><span class="ast">*</span></div><div class="c ar" style="left:743px;width:54px">1,378.86</div><div class="c ar" style="left:798px;width:54px">275.77</div><div class="c ar" style="left:853px;width:64px">1,378.86</div><div class="c ar" style="left:918px;width:54px">0.00</div><div class="c al" style="left:998px;width:59px">XML</div></div>
<div class="row" style="top:285px"><div class="c al" style="left:0px;width:74px">Orlando Pri...</div><div class="c al" style="left:75px;width:119px">Disney Area Apartme...</div><div class="c al" style="left:195px;width:38px">3.0</div><div class="c al" style="left:234px;width:75px">Self Catering</div><div class="c al" style="left:310px;width:89px">Apartment Thr...</div><div class="c al" style="left:400px;width:33px">Tue</div><div class="c al" style="left:434px;width:68px">20/06/2017</div><div class="c al" style="left:503px;width:33px">Tue</div><div class="c al" style="left:537px;width:67px">04/07/2017</div><div class="c al" style="left:605px;width:62px">Get A Bed</div><div class="c ar" style="left:743px;width:54px">1,445.98</div><div class="c ar" style="left:798px;width:54px">289.20</div><div class="c ar" style="left:853px;width:64px">1,445.98</div><div class="c ar" style="left:918px;width:54px">0.00</div><div class="c al" style="left:998px;width:59px">XML</div></div>
<div class="row" style="top:300px"><div class="c al" style="left:0px;width:74px">Orlando Pri...</div><div class="c al" style="left:75px;width:119px">Disney Area Executiv...</div><div class="c al" style="left:195px;width:38px">4.0</div><div class="c al" style="left:234px;width:75px">Self Catering</div><div class="c al" style="left:310px;width:89px">5 Bedroom Exe...</div><div class="c al" style="left:400px;width:33px">Tue</div><div class="c al" style="left:434px;width:68px">20/06/2017</div><div class="c al" style="left:503px;width:33px">Tue</div><div class="c al" style="left:537px;width:67px">04/07/2017</div><div class="c al" style="left:605px;width:62px">Get A Bed</div><div class="c ac" style="left:668px;width:24px"><span class="ast">*</span></div><div class="c ar" style="left:743px;width:54px">1,489.86</div><div class="c ar" style="left:798px;width:54px">297.97</div><div class="c ar" style="left:853px;width:64px">1,489.86</div><div class="c ar" style="left:918px;width:54px">0.00</div><div class="c al" style="left:998px;width:59px">XML</div></div>
<div class="row" style="top:315px"><div class="c al" style="left:0px;width:74px">Orlando Ar...</div><div class="c al" style="left:75px;width:119px">Disney Area Executiv...</div><div class="c al" style="left:195px;width:38px">Exe...</div><div class="c al" style="left:234px;width:75px">Room Only</div><div class="c al" style="left:310px;width:89px">6 Bedroom Exe...</div><div class="c al" style="left:400px;width:33px">Tue</div><div class="c al" style="left:434px;width:68px">20/06/2017</div><div class="c al" style="left:503px;width:33px">Tue</div><div class="c al" style="left:537px;width:67px">04/07/2017</div><div class="c al" style="left:605px;width:62px">Ocean B...</div><div class="c ac" style="left:668px;width:24px"><span class="ast">*</span></div><div class="c ar" style="left:743px;width:54px">1,512.59</div><div class="c ar" style="left:798px;width:54px">302.52</div><div class="c ar" style="left:853px;width:64px">1,512.59</div><div class="c ar" style="left:918px;width:54px">0.00</div><div class="c al" style="left:998px;width:59px">XML</div></div>
<div class="row" style="top:330px"><div class="c al" style="left:0px;width:74px">Orlando Pri...</div><div class="c al" style="left:75px;width:119px">Disney Area Executiv...</div><div class="c al" style="left:195px;width:38px">3.0</div><div class="c al" style="left:234px;width:75px">Self Catering</div><div class="c al" style="left:310px;width:89px">6 Bedroom Exe...</div><div class="c al" style="left:400px;width:33px">Tue</div><div class="c al" style="left:434px;width:68px">20/06/2017</div><div class="c al" style="left:503px;width:33px">Tue</div><div class="c al" style="left:537px;width:67px">04/07/2017</div><div class="c al" style="left:605px;width:62px">Get A Bed</div><div class="c ac" style="left:668px;width:24px"><span class="ast">*</span></div><div class="c ar" style="left:743px;width:54px">1,513.70</div><div class="c ar" style="left:798px;width:54px">302.74</div><div class="c ar" style="left:853px;width:64px">1,513.70</div><div class="c ar" style="left:918px;width:54px">0.00</div><div class="c al" style="left:998px;width:59px">XML</div></div>
<div class="row" style="top:345px"><div class="c al" style="left:0px;width:74px">Kissimmee</div><div class="c al" style="left:75px;width:119px">Disney Area Superior...</div><div class="c al" style="left:195px;width:38px">4.0</div><div class="c al" style="left:234px;width:75px">Room Only</div><div class="c al" style="left:310px;width:89px">3 Bedroom Villa</div><div class="c al" style="left:400px;width:33px">Tue</div><div class="c al" style="left:434px;width:68px">20/06/2017</div><div class="c al" style="left:503px;width:33px">Tue</div><div class="c al" style="left:537px;width:67px">04/07/2017</div><div class="c al" style="left:605px;width:62px">Get A Bed</div><div class="c ac" style="left:668px;width:24px"><span class="ast">*</span></div><div class="c ar" style="left:743px;width:54px">1,587.24</div><div class="c ar" style="left:798px;width:54px">317.45</div><div class="c ar" style="left:853px;width:64px">1,587.24</div><div class="c ar" style="left:918px;width:54px">0.00</div><div class="c al" style="left:998px;width:59px">XML</div></div>
<div class="row" style="top:360px"><div class="c al" style="left:0px;width:74px">Kissimmee</div><div class="c al" style="left:75px;width:119px">Disney Area Superior...</div><div class="c al" style="left:195px;width:38px">4.0</div><div class="c al" style="left:234px;width:75px">Self Catering</div><div class="c al" style="left:310px;width:89px">3 Bedroom Villa</div><div class="c al" style="left:400px;width:33px">Tue</div><div class="c al" style="left:434px;width:68px">20/06/2017</div><div class="c al" style="left:503px;width:33px">Tue</div><div class="c al" style="left:537px;width:67px">04/07/2017</div><div class="c al" style="left:605px;width:62px">Get A Bed</div><div class="c ac" style="left:668px;width:24px"><span class="ast">*</span></div><div class="c ar" style="left:743px;width:54px">1,587.24</div><div class="c ar" style="left:798px;width:54px">317.45</div><div class="c ar" style="left:853px;width:64px">1,587.24</div><div class="c ar" style="left:918px;width:54px">0.00</div><div class="c al" style="left:998px;width:59px">XML</div></div>
<div class="row" style="top:375px"><div class="c al" style="left:0px;width:74px">Orlando Pri...</div><div class="c al" style="left:75px;width:119px">Disney Area Executiv...</div><div class="c al" style="left:195px;width:38px">4.0</div><div class="c al" style="left:234px;width:75px">Self Catering</div><div class="c al" style="left:310px;width:89px">6 Bedroom Exe...</div><div class="c al" style="left:400px;width:33px">Tue</div><div class="c al" style="left:434px;width:68px">20/06/2017</div><div class="c al" style="left:503px;width:33px">Tue</div><div class="c al" style="left:537px;width:67px">04/07/2017</div><div class="c al" style="left:605px;width:62px">Get A Bed</div><div class="c ac" style="left:668px;width:24px"><span class="ast">*</span></div><div class="c ar" style="left:743px;width:54px">1,660.88</div><div class="c ar" style="left:798px;width:54px">332.18</div><div class="c ar" style="left:853px;width:64px">1,660.88</div><div class="c ar" style="left:918px;width:54px">0.00</div><div class="c al" style="left:998px;width:59px">XML</div></div>
<div class="row" style="top:390px"><div class="c al" style="left:0px;width:74px">Orlando Pri...</div><div class="c al" style="left:75px;width:119px">Disney Area Apartme...</div><div class="c al" style="left:195px;width:38px">3.0</div><div class="c al" style="left:234px;width:75px">Self Catering</div><div class="c al" style="left:310px;width:89px">Townhome Thr...</div><div class="c al" style="left:400px;width:33px">Tue</div><div class="c al" style="left:434px;width:68px">20/06/2017</div><div class="c al" style="left:503px;width:33px">Tue</div><div class="c al" style="left:537px;width:67px">04/07/2017</div><div class="c al" style="left:605px;width:62px">Get A Bed</div><div class="c ar" style="left:743px;width:54px">1,710.62</div><div class="c ar" style="left:798px;width:54px">342.12</div><div class="c ar" style="left:853px;width:64px">1,710.62</div><div class="c ar" style="left:918px;width:54px">0.00</div><div class="c al" style="left:998px;width:59px">XML</div></div>
<div class="row" style="top:405px"><div class="c al" style="left:0px;width:74px">Kissimmee</div><div class="c al" style="left:75px;width:119px">Disney Area Superior...</div><div class="c al" style="left:195px;width:38px">4.0</div><div class="c al" style="left:234px;width:75px">Self Catering</div><div class="c al" style="left:310px;width:89px">4 Bedroom Villa</div><div class="c al" style="left:400px;width:33px">Tue</div><div class="c al" style="left:434px;width:68px">20/06/2017</div><div class="c al" style="left:503px;width:33px">Tue</div><div class="c al" style="left:537px;width:67px">04/07/2017</div><div class="c al" style="left:605px;width:62px">Get A Bed</div><div class="c ac" style="left:668px;width:24px"><span class="ast">*</span></div><div class="c ar" style="left:743px;width:54px">1,739.85</div><div class="c ar" style="left:798px;width:54px">347.97</div><div class="c ar" style="left:853px;width:64px">1,739.85</div><div class="c ar" style="left:918px;width:54px">0.00</div><div class="c al" style="left:998px;width:59px">XML</div></div>
<div class="row" style="top:420px"><div class="c al" style="left:0px;width:74px">Kissimmee</div><div class="c al" style="left:75px;width:119px">Disney Area Superior...</div><div class="c al" style="left:195px;width:38px">4.0</div><div class="c al" style="left:234px;width:75px">Room Only</div><div class="c al" style="left:310px;width:89px">4 Bedroom Villa</div><div class="c al" style="left:400px;width:33px">Tue</div><div class="c al" style="left:434px;width:68px">20/06/2017</div><div class="c al" style="left:503px;width:33px">Tue</div><div class="c al" style="left:537px;width:67px">04/07/2017</div><div class="c al" style="left:605px;width:62px">Get A Bed</div><div class="c ac" style="left:668px;width:24px"><span class="ast">*</span></div><div class="c ar" style="left:743px;width:54px">1,739.85</div><div class="c ar" style="left:798px;width:54px">347.97</div><div class="c ar" style="left:853px;width:64px">1,739.85</div><div class="c ar" style="left:918px;width:54px">0.00</div><div class="c al" style="left:998px;width:59px">XML</div></div>
</div>

<!-- scrollbars -->
<div class="a dither" style="left:1337px;top:153px;width:16px;height:455px"></div>
<div class="btn3d" style="left:1337px;top:153px;width:16px;height:16px"><svg class="a" style="left:3px;top:5px" width="8" height="5"><path d="M4 0 L8 4 L0 4 Z" fill="#000"/></svg></div>
<div class="btn3d" style="left:1337px;top:169px;width:16px;height:129px"></div>
<div class="btn3d" style="left:1337px;top:592px;width:16px;height:16px"><svg class="a" style="left:3px;top:5px" width="8" height="5"><path d="M0 0 L8 0 L4 4 Z" fill="#000"/></svg></div>
<div class="a dither" style="left:219px;top:608px;width:1118px;height:16px"></div>
<div class="btn3d" style="left:219px;top:608px;width:16px;height:16px"><svg class="a" style="left:5px;top:3px" width="5" height="8"><path d="M4 0 L4 8 L0 4 Z" fill="#000"/></svg></div>
<div class="btn3d" style="left:235px;top:608px;width:1035px;height:16px"></div>
<div class="btn3d" style="left:1321px;top:608px;width:16px;height:16px"><svg class="a" style="left:5px;top:3px" width="5" height="8"><path d="M0 0 L4 4 L0 8 Z" fill="#000"/></svg></div>
<div class="a" style="left:1337px;top:608px;width:16px;height:16px;background:#D4D0C8"></div>

<div class="t" style="left:222px;top:651px">First portion: 6.0 sec, total search time: 26.6 sec</div>
<div class="btn3d" style="left:1323px;top:645px;width:24px;height:23px"><div class="t" style="left:0;top:2px;width:22px;text-align:center;font-family:'Liberation Serif',serif;font-weight:bold;font-size:16px;line-height:17px;color:#0050A8">i</div></div>
<div class="a" style="left:215px;top:673px;width:1142px;height:1px;background:#808080"></div>
<div class="a" style="left:215px;top:674px;width:1142px;height:17px;background:#D4D0C8"></div>
<div class="btab" style="left:215px;width:53px">Summary</div>
<div class="btab" style="left:268px;width:41px">Search</div>
<div class="btab" style="left:309px;width:112px;background:#CCFFCC">Flt 5A MAN MCO MAN</div>
<div class="btab" style="left:421px;width:66px;background:#008000;color:#fff;border-radius:0 0 3px 3px;border-right:none">Acc 5A MCO</div>
<div class="btab" style="left:487px;width:51px;background:#CCFFCC">Car MCO</div>
<div class="btab" style="left:538px;width:46px;background:#CCFFCC">Tour 5A</div>
<div class="btab" style="left:584px;width:96px">Financial Summary</div>

<!-- toolbar -->
<div class="tb">
 <div class="t" style="left:972px;width:80px;text-align:center;color:#808080;text-shadow:1px 1px 0 #fff">More</div>
 <div class="t" style="left:1007px;width:80px;text-align:center;color:#808080;text-shadow:1px 1px 0 #fff">Stop</div>
 <div class="t" style="left:1062px;width:80px;text-align:center">Facilities Filter</div>
 <div class="t" style="left:1130px;width:80px;text-align:center">Basket</div>
 <div class="t" style="left:1181px;width:80px;text-align:center">Nett Price</div>
 <div class="t" style="left:1245px;width:80px;text-align:center">Navigate</div>
 <div class="t" style="left:1290px;width:80px;text-align:center">Close</div>
</div>
<div class="a" style="left:1146px;top:82px;width:1px;height:32px;background:#808080;box-shadow:1px 0 0 #fff"></div>
<div class="a" style="left:1255px;top:82px;width:1px;height:32px;background:#808080;box-shadow:1px 0 0 #fff"></div>
<svg class="a" style="left:1008px;top:86px" width="10" height="9" viewBox="0 0 10 9"><path d="M0 0 H10 V2 H9 V4 H8 V6 H7 V8 H6 V9 H4 V8 H3 V6 H2 V4 H1 V2 H0 Z" fill="#808080"/><rect x="6" y="1" width="1" height="1" fill="#fff"/></svg>
<svg class="a" style="left:1042px;top:86px" width="8" height="8" viewBox="0 0 8 8"><rect x="0" y="0" width="8" height="8" fill="#808080"/><rect x="1" y="1" width="1" height="2" fill="#fff"/><rect x="2" y="1" width="1" height="1" fill="#fff"/></svg>
<svg class="a" style="left:1096px;top:83px" width="13" height="16" viewBox="0 0 13 16"><defs><linearGradient id="fun" x1="0" x2="1"><stop offset="0" stop-color="#9a9a9a"/><stop offset="0.45" stop-color="#f4f4f4"/><stop offset="1" stop-color="#8a8a8a"/></linearGradient></defs><ellipse cx="6.5" cy="2.2" rx="6" ry="2" fill="#A8A8A8"/><path d="M0.5 2 Q6.5 4 12.5 2 L7.5 9 V15 H5.5 V9 Z" fill="url(#fun)"/></svg>
<svg class="a" style="left:1163px;top:83px" width="16" height="16" viewBox="0 0 16 16"><path d="M15 1 H11.5 V9 H1.5 V3 H0.5" stroke="#6A6A6A" stroke-width="1.1" fill="none"/><path d="M1.5 2.8 H11.5 M2.5 3 V8.5 M4.8 3 V8.5 M7.1 3 V8.5 M9.4 3 V8.5" stroke="#6A6A6A" stroke-width="1.1"/><path d="M10 9 L9 11.5" stroke="#507070" stroke-width="1"/><circle cx="2" cy="13.8" r="1.7" fill="#E8FFFF" stroke="#F00000" stroke-width="1.2"/><circle cx="8" cy="13.8" r="1.7" fill="#E8FFFF" stroke="#F00000" stroke-width="1.2"/><path d="M3.7 13.8 H6.3" stroke="#607070" stroke-width="0.9"/></svg>
<svg class="a" style="left:1214px;top:82px" width="17" height="17" viewBox="0 0 17 17"><path d="M2 5 Q2 1 7 1 Q12 1 12 4.5 Q12 8 7 9 L4 10 Q1 11 1.5 7.5 Z" fill="#78C028"/><path d="M3.5 4.5 Q4 2.5 7 2.3 Q10 2.5 10 4" stroke="#C8EC90" stroke-width="1.2" fill="none"/><rect x="1" y="11" width="4.5" height="3" fill="#F00010"/><path d="M6 16 L14.5 5" stroke="#F00010" stroke-width="2.4"/><circle cx="7.5" cy="8.2" r="2.2" fill="#F00010"/><circle cx="13.3" cy="13.5" r="2.8" fill="#F00010"/><path d="M6.8 13.5 L8 12" stroke="#60B020" stroke-width="1.2"/></svg>
<svg class="a" style="left:1278px;top:83px" width="17" height="16" viewBox="0 0 17 16"><circle cx="9" cy="7.4" r="5.8" fill="#F0F4F8" stroke="#4A78B8" stroke-width="1.1"/><path d="M12.5 11.5 A5.8 5.8 0 0 1 5 11.6" stroke="#30C8E8" stroke-width="1.1" fill="none"/><path d="M4.8 3.4 L9.6 6.8 L8.4 8 Z" fill="#2090E0"/><path d="M12.2 10.8 L8.4 8 L9.6 6.8 Z" fill="#F01010"/><path d="M1 2.5 L3.5 1 L4.5 3.5 L2 4.5 Z" fill="#8A5A20"/><path d="M12.5 14 L14 12 L16 13.5 L14 15.5 Z" fill="#6A4010"/></svg>
<svg class="a" style="left:1324px;top:84px" width="14" height="14" viewBox="0 0 14 14"><path d="M2.5 2.5 L11.5 11.5 M11.5 2.5 L2.5 11.5" stroke="#E02838" stroke-width="3" stroke-linecap="round"/><path d="M3 3 L11 11" stroke="#F8707A" stroke-width="0.9" stroke-linecap="round"/></svg>

<!-- Status -->
<div class="t" style="left:628px;top:700px">User: 377 - Thomas Duffill</div>
<div class="t" style="left:763px;top:700px">Retailer: 'Ocean-Florida'</div>
<div class="t" style="left:890px;top:700px">Client: none</div>
<div class="t" style="left:1255px;top:700px;width:100px;text-align:right">12:13 GMT</div>

<!-- Taskbar -->
<div class="a" style="left:0;top:725px;width:1364px;height:43px;background:#D4D0C8;border-top:1px solid #fff"></div>
<div class="btn3d" style="left:2px;top:728px;width:52px;height:38px"></div>
<svg class="a" style="left:4px;top:739px" width="16" height="14" viewBox="0 0 16 14">
 <path d="M2.2 1.2 Q5 -0.2 9.5 1.2 L8.3 6.8 Q5 5.5 1 6.6 Z" fill="#E84A10"/>
 <path d="M9.8 1.4 Q12.5 2.5 15.7 1.2 L14.5 7 Q11.5 8 8.6 7 Z" fill="#58A828"/>
 <path d="M0.9 7.2 Q4.5 6.2 8.1 7.4 L7 13 Q3.5 11.8 0 13 Z" fill="#3A8EE0"/>
 <path d="M8.4 7.6 Q11.5 8.6 14.4 7.6 L13.3 13.2 Q10 14 7.3 13.2 Z" fill="#F8C010"/>
</svg>
<div class="t" style="left:21px;top:741px;font-weight:bold;font-size:12px">Start</div>
<div class="a" style="left:63px;top:728px;width:160px;height:38px;background:#fff;border-top:1px solid #404040;border-left:1px solid #404040;border-right:1px solid #fff;border-bottom:1px solid #fff;box-shadow:inset 1px 1px 0 #808080,inset -1px -1px 0 #D4D0C8"></div>
<svg class="a" style="left:69px;top:737px" width="28" height="20" viewBox="0 0 28 20">
 <defs><radialGradient id="tg" cx="0.3" cy="0.2" r="0.9"><stop offset="0" stop-color="#FFE850"/><stop offset="0.35" stop-color="#F8B020"/><stop offset="0.7" stop-color="#D86010"/><stop offset="1" stop-color="#B83808"/></radialGradient></defs>
 <path d="M0.5 8 Q1 2 5 0.5 Q13 0.5 19 2 L27.5 6.5 L15 19.5 L1 11 Z" fill="url(#tg)"/>
</svg>
<div class="t" style="left:102px;top:741px;font-weight:bold;font-size:12px">Interactive - Ocea...</div>
<div class="a" style="left:1172px;top:728px;width:190px;height:38px;border-top:1px solid #808080;border-left:1px solid #808080;border-right:1px solid #fff;border-bottom:1px solid #fff"></div>
<svg class="a" style="left:1179px;top:739px" width="16" height="16" viewBox="0 0 16 16">
 <path d="M0 1 L8 0 L7 8 L0 8 Z" fill="#F7A600"/><path d="M8 0 L16 1 L16 8 L7 8 Z" fill="#2A7DC0"/>
 <path d="M0 8 L7 8 L8 16 L0 15 Z" fill="#4CA640"/><path d="M7 8 L16 8 L16 15 L8 16 Z" fill="#D8281E"/>
</svg>
<svg class="a" style="left:1203px;top:742px" width="16" height="10" viewBox="0 0 16 10">
 <rect x="0" y="1" width="13" height="6" fill="#3AB44A" stroke="#1F5F20" stroke-width="0.8"/><rect x="9" y="2" width="3" height="3" fill="#222"/><rect x="4" y="7" width="6" height="2" fill="#E8C000"/><path d="M13.5 1 V8 M13.5 1 H16 M13.5 4 H15.5" stroke="#222" stroke-width="1"/>
</svg>
<svg class="a" style="left:1227px;top:739px" width="16" height="16" viewBox="0 0 16 16">
 <rect x="6" y="4" width="9" height="8" fill="#C0C0C0" stroke="#666" stroke-width="1"/><rect x="5" y="13" width="11" height="2" fill="#aaa" stroke="#666" stroke-width="0.6"/><path d="M1 1 V6 H4 V1 M2.5 6 V15 H6" stroke="#555" stroke-width="1.2" fill="none"/>
</svg>
<svg class="a" style="left:1251px;top:740px" width="16" height="16" viewBox="0 0 16 16">
 <path d="M1 5 H4 L8 1 V14 L4 10 H1 Z" fill="#e8e8e8" stroke="#777" stroke-width="0.8"/><circle cx="11.5" cy="11" r="4.2" fill="#E0242A"/><path d="M9.5 9 L13.5 13 M13.5 9 L9.5 13" stroke="#fff" stroke-width="1.4"/>
</svg>
<div class="t" style="left:1294px;top:733px">12:13</div>
<div class="t" style="left:1281px;top:749px">12/05/2016</div>
<svg class="a" style="left:1344px;top:741px" width="16" height="13" viewBox="0 0 16 13">
 <rect x="0.5" y="0.5" width="15" height="12" fill="#2C6FC8" stroke="#8AAAD0" stroke-width="1"/><rect x="3" y="9" width="12" height="2" fill="#222"/><rect x="1" y="9" width="2" height="2" fill="#F2A000"/>
</svg>

</body></html>
